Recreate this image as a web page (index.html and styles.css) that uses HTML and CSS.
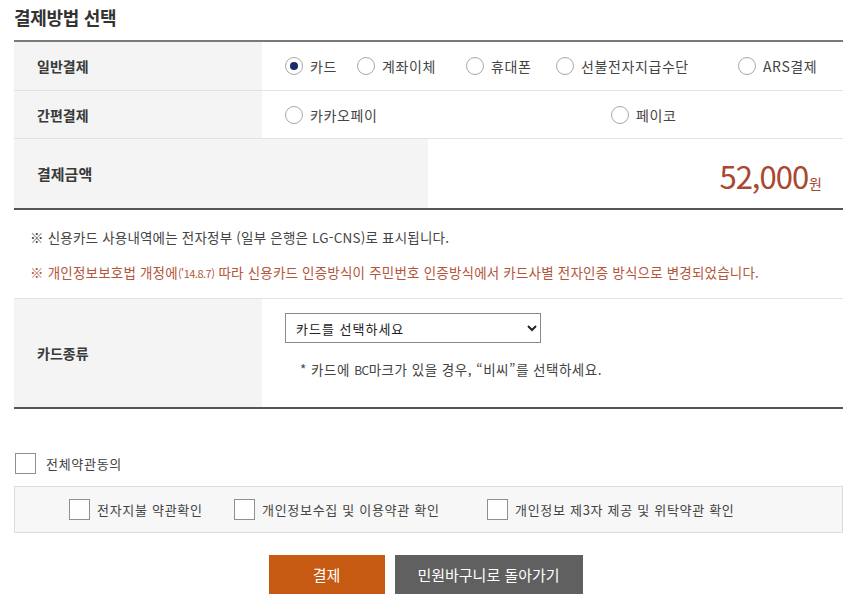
FILE: index.html
```html
<!DOCTYPE html>
<html lang="ko">
<head>
<meta charset="utf-8">
<title>결제방법 선택</title>
<link rel="stylesheet" href="styles.css">
</head>
<body>
<div class="page">
  <h2 class="title">결제방법 선택</h2>

  <div class="pay-table">
    <div class="row">
      <div class="th">일반결제</div>
      <div class="td radios">
        <label class="radio w-card"><input type="radio" name="pay" checked><span>카드</span></label>
        <label class="radio w-bank"><input type="radio" name="pay"><span>계좌이체</span></label>
        <label class="radio w-phone"><input type="radio" name="pay"><span>휴대폰</span></label>
        <label class="radio w-prepaid"><input type="radio" name="pay"><span>선불전자지급수단</span></label>
        <label class="radio"><input type="radio" name="pay"><span>ARS결제</span></label>
      </div>
    </div>
    <div class="row">
      <div class="th">간편결제</div>
      <div class="td radios">
        <label class="radio w-kakao"><input type="radio" name="pay"><span>카카오페이</span></label>
        <label class="radio"><input type="radio" name="pay"><span>페이코</span></label>
      </div>
    </div>
    <div class="row row-amount">
      <div class="th th-wide">결제금액</div>
      <div class="td amount"><span class="num">52,000</span><span class="won">원</span></div>
    </div>
  </div>

  <div class="notice">
    <p>※ 신용카드 사용내역에는 전자정부 (일부 은행은 LG-CNS)로 표시됩니다.</p>
    <p class="warn">※ 개인정보보호법 개정에<span class="small">('14.8.7)</span> 따라 신용카드 인증방식이 주민번호 인증방식에서 카드사별 전자인증 방식으로 변경되었습니다.</p>
  </div>

  <div class="card-table">
    <div class="row row-card">
      <div class="th">카드종류</div>
      <div class="td card-cell">
        <select class="card-select">
          <option>카드를 선택하세요</option>
        </select>
        <p class="card-note">* 카드에 <span class="bc">BC</span>마크가 있을 경우, “비씨”를 선택하세요.</p>
      </div>
    </div>
  </div>

  <label class="check agree-all"><input type="checkbox"><span>전체약관동의</span></label>

  <div class="agree-box">
    <label class="check w-ag1"><input type="checkbox"><span>전자지불 약관확인</span></label>
    <label class="check w-ag2"><input type="checkbox"><span>개인정보수집 및 이용약관 확인</span></label>
    <label class="check"><input type="checkbox"><span>개인정보 제3자 제공 및 위탁약관 확인</span></label>
  </div>

  <div class="buttons">
    <button class="btn btn-pay" type="button">결제</button>
    <button class="btn btn-back" type="button">민원바구니로 돌아가기</button>
  </div>
</div>
</body>
</html>
```

FILE: styles.css
```css
* { box-sizing: border-box; }

html, body {
  margin: 0;
  padding: 0;
  background: #fff;
}

body {
  font-family: "Noto Sans CJK KR", "Noto Sans", sans-serif;
  color: #333;
  font-size: 14px;
}

.page {
  width: 829px;
  margin-left: 14px;
}

.title {
  margin: 0;
  height: 40px;
  line-height: 34px;
  font-size: 18px;
  font-weight: 700;
  color: #333;
  letter-spacing: -0.3px;
}

.pay-table {
  border-top: 2px solid #7a7a7a;
  border-bottom: 2px solid #555;
}

.row {
  display: flex;
  border-top: 1px solid #e2e2e2;
}

.row:first-child { border-top: 0; }

.th {
  width: 248px;
  flex: none;
  background: #f4f4f4;
  padding-left: 23px;
  display: flex;
  align-items: center;
  font-size: 14px;
  font-weight: 700;
  color: #3a3a3a;
}

.th-wide { width: 414px; font-size: 15px; }

.td {
  flex: 1;
  display: flex;
  align-items: center;
}

.pay-table .row { height: 48px; }
.pay-table .row-amount { height: 70px; }

.radios { padding-left: 23px; }

.radio {
  display: flex;
  align-items: center;
  font-size: 14px;
  color: #444;
  letter-spacing: 0.6px;
  cursor: pointer;
}

.radio input {
  appearance: none;
  -webkit-appearance: none;
  width: 18px;
  height: 18px;
  margin: 0 7px 0 0;
  border: 1px solid #a8a8a8;
  border-radius: 50%;
  background: #fff;
  position: relative;
  flex: none;
}

.radio input:checked::after {
  content: "";
  position: absolute;
  left: 4px;
  top: 4px;
  width: 8px;
  height: 8px;
  border-radius: 50%;
  background: #1d2a6b;
}

.w-card { width: 72px; }
.w-bank { width: 109px; }
.w-phone { width: 90px; }
.w-prepaid { width: 182px; }
.w-kakao { width: 326px; }

.amount {
  justify-content: flex-end;
  align-items: baseline;
  padding: 14px 21px 0 0;
  background: #fff;
  color: #a9472f;
}

.amount .num {
  font-size: 31px;
  font-weight: 400;
  letter-spacing: -1px;
}

.amount .won {
  font-size: 14px;
  margin-left: 1px;
}

.notice {
  padding: 17px 0 0 16px;
}

.notice p {
  margin: 0;
  height: 35px;
  line-height: 20px;
  font-size: 13.5px;
  color: #444;
  letter-spacing: 0.2px;
}

.notice p.warn { color: #b3563c; height: 36px; }

.small { font-size: 11px; letter-spacing: -0.5px; }
.bc { font-size: 12px; letter-spacing: -0.5px; }

.card-table {
  border-top: 1px solid #e2e2e2;
  border-bottom: 2px solid #555;
}

.row-card { height: 108px; border-top: 0; }

.card-cell {
  flex-direction: column;
  align-items: flex-start;
  padding: 14px 0 0 23px;
  justify-content: flex-start;
}

.card-select {
  width: 256px;
  height: 30px;
  border: 1px solid #8a8a8a;
  border-radius: 0;
  background: #fff;
  padding: 0 6px;
  font-family: "Noto Sans CJK KR", "Noto Sans", sans-serif;
  font-size: 13px;
  letter-spacing: 1px;
  color: #222;
}

.card-note {
  margin: 16px 0 0 15px;
  font-size: 13.5px;
  color: #444;
  letter-spacing: 0.5px;
}

.check {
  display: flex;
  align-items: center;
  font-size: 13px;
  color: #444;
  letter-spacing: 0.7px;
  cursor: pointer;
}

.check input {
  appearance: none;
  -webkit-appearance: none;
  width: 21px;
  height: 21px;
  margin: 0 8px 0 0;
  border: 1px solid #8f8f8f;
  background: #fff;
  flex: none;
}

.agree-all {
  margin-top: 44px;
  margin-left: 1px;
  height: 21px;
}

.agree-all input { margin-right: 10px; }

.agree-box {
  margin-top: 12px;
  height: 47px;
  border: 1px solid #dcdcdc;
  background: #f7f7f7;
  display: flex;
  align-items: center;
  padding-left: 54px;
}

.w-ag1 { width: 165px; }
.w-ag2 { width: 253px; }

.agree-box .check input { margin-right: 7px; }

.buttons {
  display: flex;
  justify-content: center;
  gap: 10px;
  margin-top: 22px;
  padding-right: 6px;
}

.btn {
  height: 39px;
  border: 0;
  color: #fff;
  font-family: "Noto Sans CJK KR", "Noto Sans", sans-serif;
  font-size: 15px;
  cursor: pointer;
}

.btn-pay { width: 116px; background: #c75a12; }
.btn-back { width: 188px; background: #606060; }
```
